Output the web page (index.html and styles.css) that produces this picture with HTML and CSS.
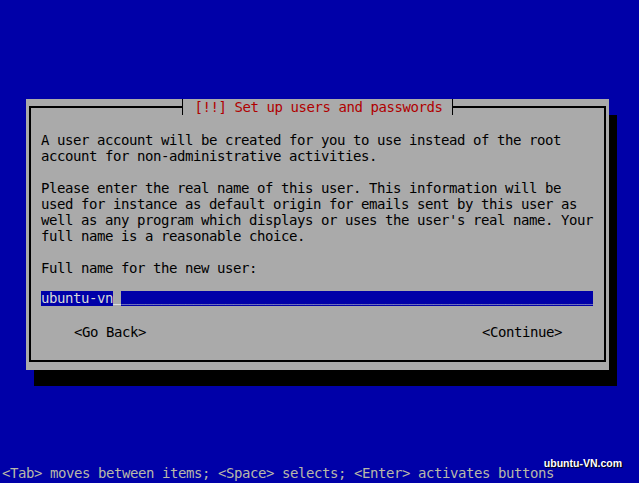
FILE: index.html
```html
<!DOCTYPE html>
<html lang="en">
<head>
    <meta charset="UTF-8">
    <meta name="viewport" content="width=device-width, initial-scale=1.0">
    <title>Set up users and passwords</title>
    <link rel="stylesheet" href="styles.css">
</head>
<body>

    <div class="screen">
        <div class="dialog">
            <div class="frame">
                <h1 class="title">[!!] Set up users and passwords</h1>

                <p>A user account will be created for you to use instead of the root<br>
                account for non-administrative activities.</p>

                <p>Please enter the real name of this user. This information will be<br>
                used for instance as default origin for emails sent by this user as<br>
                well as any program which displays or uses the user's real name. Your<br>
                full name is a reasonable choice.</p>

                <p class="label">Full name for the new user:</p>

                <div class="entry">
                    <span class="value">ubuntu-vn</span><span class="cursor">_</span><span class="fill">___________________________________________________________</span>
                </div>

                <div class="buttons">
                    <span>&lt;Go Back&gt;</span>
                    <span>&lt;Continue&gt;</span>
                </div>
            </div>
        </div>

        <div class="hint">&lt;Tab&gt; moves between items; &lt;Space&gt; selects; &lt;Enter&gt; activates buttons</div>

        <div class="watermark">ubuntu-VN.com</div>
    </div>

</body>
</html>
```

FILE: styles.css
```css
html, body {
    margin: 0;
    background-color: #0000a8;
}

.screen {
    position: relative;
    height: 483px;
    display: flex;
    flex-direction: column;
    font-family: "DejaVu Sans Mono", "Liberation Mono", monospace;
    font-size: 14px;
    letter-spacing: -0.43px;
    line-height: 16px;
}

.dialog {
    margin: 99px 0 0 26px;
    width: 583px;
    height: 271px;
    box-sizing: border-box;
    padding: 7px 3px 8px 3px;
    background-color: #aaaaaa;
    box-shadow: 8px 16px 0 #000;
    color: #000;
}

.frame {
    position: relative;
    height: 100%;
    box-sizing: border-box;
    border: 2px solid #000;
    padding: 24px 11px 0 10px;
}

/* title sits on top of the frame line */
.title {
    position: absolute;
    top: -9px;
    left: 50%;
    transform: translateX(-50%);
    margin: 0;
    height: 16px;
    padding: 0 10px 0 12px;
    border-left: 1px solid #000;
    border-right: 1px solid #000;
    background-color: #aaaaaa;
    color: #b00000;
    font-size: inherit;
    font-weight: normal;
    white-space: nowrap;
}

.frame p {
    margin: 0 0 16px 0;
    white-space: nowrap;
}

.frame p.label {
    margin-bottom: 15px;
}

.entry {
    display: flex;
    align-items: flex-start;
    margin-bottom: 18px;
    white-space: nowrap;
}

.entry .value {
    line-height: 15px;
    background-color: #0000a8;
    color: #d8d8d8;
}

/* underscores sit a bit higher so they stay inside the bar */
.entry .cursor,
.entry .fill {
    line-height: 11px;
    padding-bottom: 4px;
}

.entry .cursor {
    color: #ffffff;
}

.entry .fill {
    flex: 1;
    background-color: #0000a8;
    color: #b8b8c8;
}

.buttons {
    display: flex;
    justify-content: space-between;
    padding: 0 31px 0 33px;
}

.hint {
    margin-top: auto;
    margin-bottom: 2px;
    padding-left: 2px;
    color: #b8b8a8;
    white-space: nowrap;
}

.watermark {
    position: absolute;
    top: 455px;
    right: 17px;
    font-family: "Liberation Sans", Arial, sans-serif;
    font-weight: bold;
    font-size: 10.5px;
    letter-spacing: 0;
    color: #ffffff;
    text-shadow: 1px 1px 1px #000;
}
```
